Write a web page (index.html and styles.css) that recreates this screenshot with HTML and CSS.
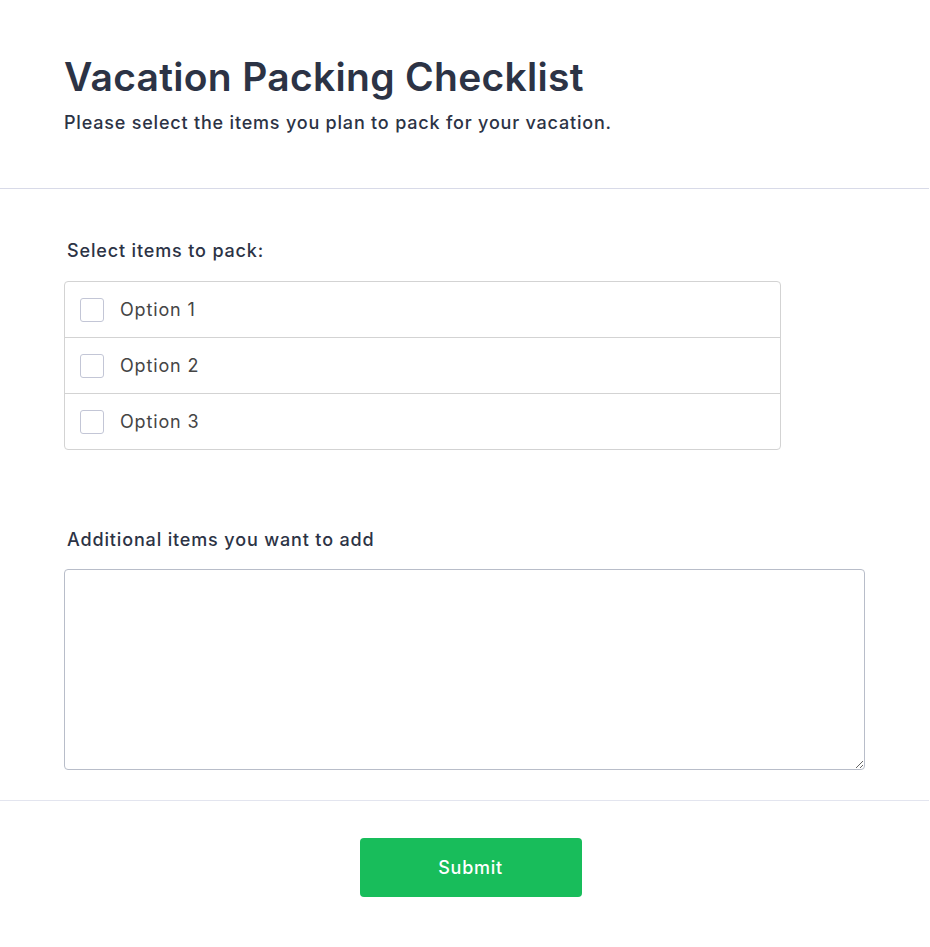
FILE: index.html
```html
<!DOCTYPE html>
<html lang="en">
<head>
<meta charset="utf-8">
<title>Vacation Packing Checklist</title>
<link rel="stylesheet" href="styles.css">
</head>
<body>
<form class="form">
  <header class="header">
    <h1 class="title">Vacation Packing Checklist</h1>
    <p class="subtitle">Please select the items you plan to pack for your vacation.</p>
  </header>
  <section class="body">
    <div class="field">
      <label class="label">Select items to pack:</label>
      <div class="options">
        <label class="option"><span class="box"></span><span class="option-text">Option 1</span></label>
        <label class="option"><span class="box"></span><span class="option-text">Option 2</span></label>
        <label class="option"><span class="box"></span><span class="option-text">Option 3</span></label>
      </div>
    </div>
    <div class="field field-text">
      <label class="label">Additional items you want to add</label>
      <textarea class="textarea"></textarea>
    </div>
  </section>
  <footer class="footer">
    <button type="button" class="submit">Submit</button>
  </footer>
</form>
</body>
</html>
```
FILE: styles.css
```css
html, body {
  margin: 0;
  padding: 0;
  background: #ffffff;
}
body {
  font-family: Inter, "Noto Sans", sans-serif;
  color: #2c3345;
  width: 929px;
}
.header {
  padding: 53px 64px 0 64px;
  height: 135px;
  border-bottom: 1px solid #d8dae8;
}
.title {
  margin: 0;
  font-size: 39px;
  line-height: 48px;
  font-weight: 600;
  letter-spacing: 0.3px;
  color: #2c3345;
}
.subtitle {
  margin: 10px 0 0 0;
  font-size: 18px;
  line-height: 24px;
  font-weight: 500;
  letter-spacing: 0.8px;
  color: #2c3345;
}
.body {
  padding: 50px 64px 30px 64px;
  border-bottom: 1px solid #e3e5ef;
}
.field {
  display: flex;
  flex-direction: column;
}
.label {
  padding-left: 3px;
  font-size: 18px;
  line-height: 24px;
  font-weight: 500;
  letter-spacing: 0.85px;
  color: #2c3345;
  margin-bottom: 18px;
}
.options {
  width: 715px;
  border: 1px solid #d3d3d3;
  border-radius: 4px;
}
.option {
  display: flex;
  align-items: center;
  height: 55px;
  padding-left: 15px;
  border-top: 1px solid #d3d3d3;
}
.option:first-child {
  border-top: none;
}
.box {
  width: 24px;
  height: 24px;
  border: 1px solid #c3c6d6;
  border-radius: 3px;
  box-sizing: border-box;
  background: #fff;
}
.option-text {
  margin-left: 16px;
  font-size: 18px;
  letter-spacing: 0.85px;
  color: #454545;
}
.field-text {
  margin-top: 78px;
}
.field-text .label {
  margin-bottom: 17px;
}
.textarea {
  width: 801px;
  height: 201px;
  box-sizing: border-box;
  border: 1px solid #b8bdc9;
  border-radius: 4px;
  font-family: inherit;
  font-size: 16px;
  padding: 8px;
  margin: 0;
}
.footer {
  display: flex;
  justify-content: center;
  padding: 37px 0 50px 0;
}
.submit {
  width: 222px;
  height: 59px;
  border: none;
  border-radius: 4px;
  background: #18bd5b;
  color: #ffffff;
  font-family: Inter, "Noto Sans", sans-serif;
  font-size: 18px;
  font-weight: 500;
  letter-spacing: 0.7px;
  margin-left: 12px;
}
```
